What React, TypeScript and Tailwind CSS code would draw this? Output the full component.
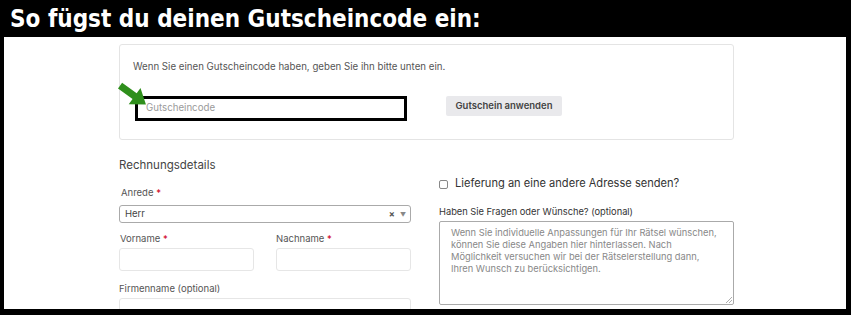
export default function App() {
    return (
        <div className="w-[851px] h-[315px] bg-black flex flex-col overflow-hidden" style={{ fontFamily: 'Inter, "Liberation Sans", sans-serif' }}>
            <div className="h-[37px] shrink-0 pl-[10px] flex items-center">
                <span
                    className="text-white font-bold text-[24px] leading-none"
                    style={{ fontFamily: '"DejaVu Sans Condensed", "DejaVu Sans", sans-serif' }}
                >
                    So fügst du deinen Gutscheincode ein:
                </span>
            </div>

            <div className="ml-[4px] mr-[5px] h-[272px] shrink-0 bg-white overflow-hidden pl-[115px] pt-[7px]">
                {/* Gutschein */}
                <div className="w-[615px] h-[96px] border border-[#e4e4e4] rounded-[3px] pl-[13px] pt-[15px]">
                    <div className="text-[9.7px] leading-[14px] text-[#555]">
                        Wenn Sie einen Gutscheincode haben, geben Sie ihn bitte unten ein.
                    </div>
                    <div className="flex items-start mt-[22px] pl-[2px]">
                        <div className="relative w-[272px] h-[25px] border-[3px] border-black bg-white flex items-center pl-[8px]">
                            <span className="text-[9.7px] text-[#9a9a9a]">Gutscheincode</span>
                            <svg
                                className="absolute left-[-22px] top-[-19px]"
                                width="34"
                                height="30"
                                viewBox="0 0 34 30"
                            >
                                <g transform="rotate(36 17 15)">
                                    <polygon points="1,11.5 19,11.5 19,5 33,15 19,25 19,18.5 1,18.5" fill="#2f8f1c" />
                                </g>
                            </svg>
                        </div>
                        <button className="ml-[39px] w-[116px] h-[20px] bg-[#e9e9ec] rounded-[2px] text-[9.5px] font-semibold text-[#444]">
                            Gutschein anwenden
                        </button>
                    </div>
                </div>

                <div className="flex">
                    {/* Rechnungsdetails */}
                    <div className="w-[292px] pt-[17px]">
                        <div className="text-[11.5px] leading-[16px] text-[#444]">Rechnungsdetails</div>
                        <div className="mt-[13px] text-[9.5px] leading-[14px] text-[#555] pl-[2px]">
                            Anrede <span className="text-[#d0021b]">*</span>
                        </div>
                        <div className="mt-[5px] h-[18px] border border-[#aaa] rounded-[3px] flex items-center pl-[5px] pr-[4px]">
                            <span className="text-[9.5px] text-[#444] flex-1">Herr</span>
                            <span className="text-[9px] text-[#555] font-bold mr-[5px]">×</span>
                            <span className="text-[6px] text-[#888]">▼</span>
                        </div>
                        <div className="flex gap-[22px] mt-[9px]">
                            <div className="w-[135px]">
                                <div className="text-[9.5px] leading-[14px] text-[#555] pl-[1px]">
                                    Vorname <span className="text-[#d0021b]">*</span>
                                </div>
                                <div className="mt-[2px] h-[23px] border border-[#e6e6e6] rounded-[3px]" />
                            </div>
                            <div className="w-[135px]">
                                <div className="text-[9.5px] leading-[14px] text-[#555]">
                                    Nachname <span className="text-[#d0021b]">*</span>
                                </div>
                                <div className="mt-[2px] h-[23px] border border-[#e6e6e6] rounded-[3px]" />
                            </div>
                        </div>
                        <div className="mt-[11px] text-[9.5px] leading-[14px] text-[#555]">Firmenname (optional)</div>
                        <div className="mt-[2px] h-[23px] border border-[#e6e6e6] rounded-[3px]" />
                    </div>

                    {/* Rechts */}
                    <div className="ml-[28px] w-[295px] pt-[36px]">
                        <div className="flex items-center">
                            <span className="w-[9px] h-[9px] border border-[#888] rounded-[2px] mr-[7px] mt-[2px]" />
                            <span className="text-[11.1px] leading-[14px] text-[#333]">
                                Lieferung an eine andere Adresse senden?
                            </span>
                        </div>
                        <div className="mt-[15px] text-[9.3px] leading-[14px] text-[#333]">
                            Haben Sie Fragen oder Wünsche? (optional)
                        </div>
                        <div className="relative mt-[2px] h-[84px] border border-[#aaa] rounded-[2px] pl-[11px] pr-[14px] pt-[5px]">
                            <div className="text-[9.3px] leading-[12px] text-[#888]">
                                Wenn Sie individuelle Anpassungen für Ihr Rätsel wünschen, können Sie diese Angaben hier hinterlassen. Nach Möglichkeit versuchen wir bei der Rätselerstellung dann, Ihren Wunsch zu berücksichtigen.
                            </div>
                            <svg className="absolute right-[1px] bottom-[1px]" width="6" height="6" viewBox="0 0 6 6">
                                <path d="M6 0 L0 6 M6 3 L3 6" stroke="#999" strokeWidth="0.8" />
                            </svg>
                        </div>
                    </div>
                </div>
            </div>
        </div>
    )
}
